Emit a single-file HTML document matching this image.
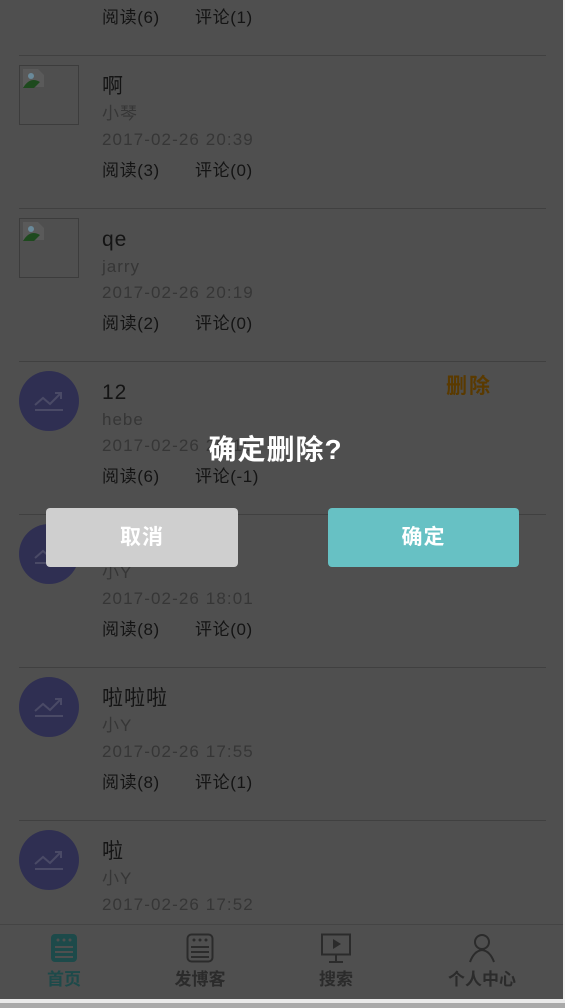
<!DOCTYPE html><html><head><meta charset="utf-8"><style>
*{margin:0;padding:0;box-sizing:border-box}
body{width:565px;height:1008px;overflow:hidden;background:#4f4f4f;position:relative;font-family:"Liberation Sans","Noto Sans CJK SC",sans-serif}
.it{position:absolute;left:0;width:565px;height:153px}
.sep{position:absolute;left:19px;width:527px;top:0;height:1px;background:#404040}
.av{position:absolute;left:19px;top:10px;width:60px;height:60px}
.circ{border-radius:50%;background:#2f2f52}
.img{border:1px solid #3c3c3c}
.t{position:absolute;left:102px;font-size:21px;color:#141414;top:19px;line-height:26px;letter-spacing:1px}
.a{position:absolute;left:102px;font-size:17px;color:#363636;top:48px;line-height:22px;letter-spacing:1px}
.d{position:absolute;left:102px;font-size:17px;color:#363636;top:74px;line-height:22px;letter-spacing:1.1px}
.r{position:absolute;left:102px;font-size:17px;color:#141414;top:105px;line-height:22px;white-space:pre;letter-spacing:0.6px}
.r b{font-weight:normal;position:absolute;left:93px;top:0}
.nav{position:absolute;left:0;top:924px;width:563px;height:76px;border-top:1px solid #444}
.n{position:absolute;top:0;width:100px;text-align:center;font-size:17px;font-weight:bold;color:#2b2b2b}
.n svg{display:block;margin:8px auto 0}
.n span{display:block;margin-top:2px}
</style></head><body>
<div class="it" style="top:-98px"><div class="r">阅读(6)<b>评论(1)</b></div></div>

<div class="it" style="top:55px"><div class="sep"></div><div class="av img"><svg width="24" height="22" style="margin:2px"><path d="M1 1h15l6 6v12H1z" fill="#5a5a5a"/><path d="M1 20 Q8 8 18 14 L12 20Z" fill="#1e4a1e"/><circle cx="9" cy="8" r="3" fill="#6a8a9a"/></svg></div>
<div class="t">啊</div><div class="a">小琴</div><div class="d">2017-02-26 20:39</div><div class="r">阅读(3)<b>评论(0)</b></div></div>

<div class="it" style="top:208px"><div class="sep"></div><div class="av img"><svg width="24" height="22" style="margin:2px"><path d="M1 1h15l6 6v12H1z" fill="#5a5a5a"/><path d="M1 20 Q8 8 18 14 L12 20Z" fill="#1e4a1e"/><circle cx="9" cy="8" r="3" fill="#6a8a9a"/></svg></div>
<div class="t">qe</div><div class="a">jarry</div><div class="d">2017-02-26 20:19</div><div class="r">阅读(2)<b>评论(0)</b></div></div>

<div class="it" style="top:361px"><div class="sep"></div><div class="av circ"><svg width="60" height="60"><path d="M16 34 L24 27 L31 33 L42 22 M36 22h6v6 M16 39h28" stroke="#4a4a66" stroke-width="2" fill="none"/></svg></div>
<div class="t">12</div><div class="a">hebe</div><div class="d">2017-02-26 20:15</div><div class="r">阅读(6)<b>评论(-1)</b></div>
<div style="position:absolute;left:446px;top:9px;font-size:21px;font-weight:bold;color:#5a3a00;letter-spacing:2px">删除</div></div>

<div class="it" style="top:514px"><div class="sep"></div><div class="av circ"><svg width="60" height="60"><path d="M16 34 L24 27 L31 33 L42 22 M36 22h6v6 M16 39h28" stroke="#4a4a66" stroke-width="2" fill="none"/></svg></div>
<div class="t">啦啦</div><div class="a">小Y</div><div class="d">2017-02-26 18:01</div><div class="r">阅读(8)<b>评论(0)</b></div></div>

<div class="it" style="top:667px"><div class="sep"></div><div class="av circ"><svg width="60" height="60"><path d="M16 34 L24 27 L31 33 L42 22 M36 22h6v6 M16 39h28" stroke="#4a4a66" stroke-width="2" fill="none"/></svg></div>
<div class="t">啦啦啦</div><div class="a">小Y</div><div class="d">2017-02-26 17:55</div><div class="r">阅读(8)<b>评论(1)</b></div></div>

<div class="it" style="top:820px"><div class="sep"></div><div class="av circ"><svg width="60" height="60"><path d="M16 34 L24 27 L31 33 L42 22 M36 22h6v6 M16 39h28" stroke="#4a4a66" stroke-width="2" fill="none"/></svg></div>
<div class="t">啦</div><div class="a">小Y</div><div class="d">2017-02-26 17:52</div></div>

<div style="position:absolute;left:0;top:428px;width:551px;text-align:center;font-size:28px;font-weight:bold;color:#fff;letter-spacing:1px">确定删除?</div>
<div style="position:absolute;left:46px;top:508px;width:192px;height:59px;background:#cfcfcf;border-radius:4px;color:#fff;font-size:21px;font-weight:bold;text-align:center;line-height:59px;letter-spacing:1px">取消</div>
<div style="position:absolute;left:328px;top:508px;width:191px;height:59px;background:#67c1c4;border-radius:4px;color:#fff;font-size:21px;font-weight:bold;text-align:center;line-height:59px;letter-spacing:1px">确定</div>

<div class="nav">
<div class="n" style="left:14px;color:#1d4a4a"><svg width="28" height="30"><rect x="1" y="1" width="26" height="28" rx="4" fill="#1d4a4a"/><circle cx="8" cy="7" r="1.5" fill="#4f4f4f"/><circle cx="14" cy="7" r="1.5" fill="#4f4f4f"/><circle cx="20" cy="7" r="1.5" fill="#4f4f4f"/><path d="M5 14h18M5 19h18M5 24h18" stroke="#4f4f4f" stroke-width="2"/></svg><span>首页</span></div>
<div class="n" style="left:150px"><svg width="28" height="30"><rect x="1.5" y="1.5" width="25" height="27" rx="4" fill="none" stroke="#2b2b2b" stroke-width="2"/><circle cx="8" cy="7" r="1.5" fill="#2b2b2b"/><circle cx="14" cy="7" r="1.5" fill="#2b2b2b"/><circle cx="20" cy="7" r="1.5" fill="#2b2b2b"/><path d="M5 14h18M5 19h18M5 24h18" stroke="#2b2b2b" stroke-width="2"/></svg><span>发博客</span></div>
<div class="n" style="left:286px"><svg width="32" height="30"><rect x="2" y="1.5" width="28" height="20" fill="none" stroke="#2b2b2b" stroke-width="2"/><path d="M13 6l8 5-8 5z" fill="#2b2b2b"/><path d="M16 22v7M9 29h14" stroke="#2b2b2b" stroke-width="2"/></svg><span>搜索</span></div>
<div class="n" style="left:432px"><svg width="28" height="30"><circle cx="14" cy="9" r="7" fill="none" stroke="#2b2b2b" stroke-width="2"/><path d="M2 29 Q6 18 14 17 Q22 18 26 29" fill="none" stroke="#2b2b2b" stroke-width="2"/></svg><span>个人中心</span></div>
</div>
<div style="position:absolute;left:0;top:999px;width:565px;height:4px;background:#e9e9e9"></div>
<div style="position:absolute;left:0;top:1003px;width:565px;height:5px;background:#a9a9a9"></div>
<div style="position:absolute;left:563px;top:0;width:2px;height:1000px;background:#f4f4f4"></div>
</body></html>
